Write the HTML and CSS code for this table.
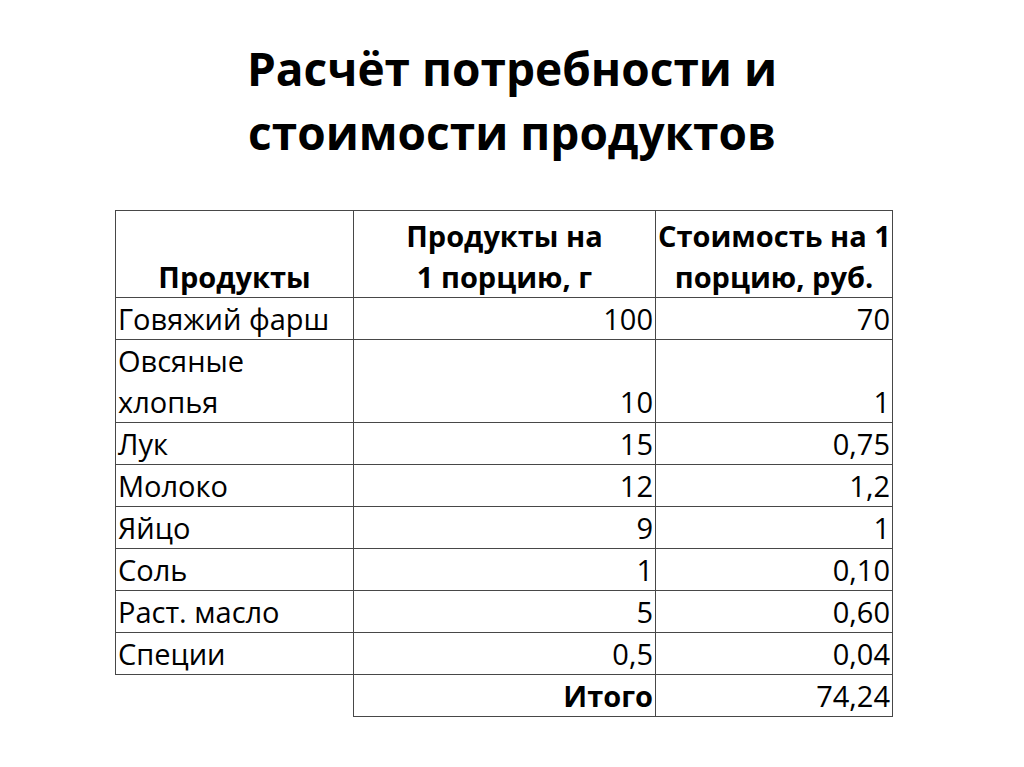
FILE: index.html
```html
<!DOCTYPE html>
<html lang="ru">
<head>
<meta charset="utf-8">
<title>Расчёт потребности и стоимости продуктов</title>
<link rel="stylesheet" href="styles.css">
</head>
<body>
<div class="slide">
  <h1 class="title">Расчёт потребности и<br>стоимости продуктов</h1>
  <table class="grid">
    <colgroup>
      <col class="c1"><col class="c2"><col class="c3">
    </colgroup>
    <thead>
      <tr>
        <th>Продукты</th>
        <th>Продукты на<br>1 порцию, г</th>
        <th>Стоимость на 1<br>порцию, руб.</th>
      </tr>
    </thead>
    <tbody>
      <tr><td>Говяжий фарш</td><td class="num">100</td><td class="num">70</td></tr>
      <tr><td>Овсяные<br>хлопья</td><td class="num">10</td><td class="num">1</td></tr>
      <tr><td>Лук</td><td class="num">15</td><td class="num">0,75</td></tr>
      <tr><td>Молоко</td><td class="num">12</td><td class="num">1,2</td></tr>
      <tr><td>Яйцо</td><td class="num">9</td><td class="num">1</td></tr>
      <tr><td>Соль</td><td class="num">1</td><td class="num">0,10</td></tr>
      <tr><td>Раст. масло</td><td class="num">5</td><td class="num">0,60</td></tr>
      <tr><td>Специи</td><td class="num">0,5</td><td class="num">0,04</td></tr>
      <tr class="total"><td class="empty"></td><td class="num strong">Итого</td><td class="num">74,24</td></tr>
    </tbody>
  </table>
</div>
</body>
</html>
```
FILE: styles.css
```css
html, body {
  margin: 0;
  padding: 0;
  background: #ffffff;
}
.slide {
  width: 1024px;
  height: 767px;
  overflow: hidden;
  font-family: "Open Sans", Lato, "Noto Sans", sans-serif;
  color: #000;
  display: flex;
  flex-direction: column;
  align-items: flex-start;
}
.title {
  align-self: stretch;
  margin: 36px 0 0 0;
  text-align: center;
  font-size: 46px;
  line-height: 64px;
  font-weight: 700;
}
.grid {
  margin: 46px 0 0 115px;
  border-collapse: collapse;
  table-layout: fixed;
  width: 777px;
  font-size: 29px;
  line-height: 41px;
}
.c1 { width: 238px; }
.c2 { width: 302px; }
.c3 { width: 237px; }
.grid th, .grid td {
  border: 1px solid #474747;
  padding: 0 2px;
  vertical-align: bottom;
  white-space: nowrap;
  font-weight: 400;
}
.grid th {
  font-weight: 700;
  text-align: center;
  padding-top: 4px;
}
.grid td { text-align: left; }
.grid td.num { text-align: right; }
.grid td.strong { font-weight: 700; }
.grid td.empty { border: none; }
```
